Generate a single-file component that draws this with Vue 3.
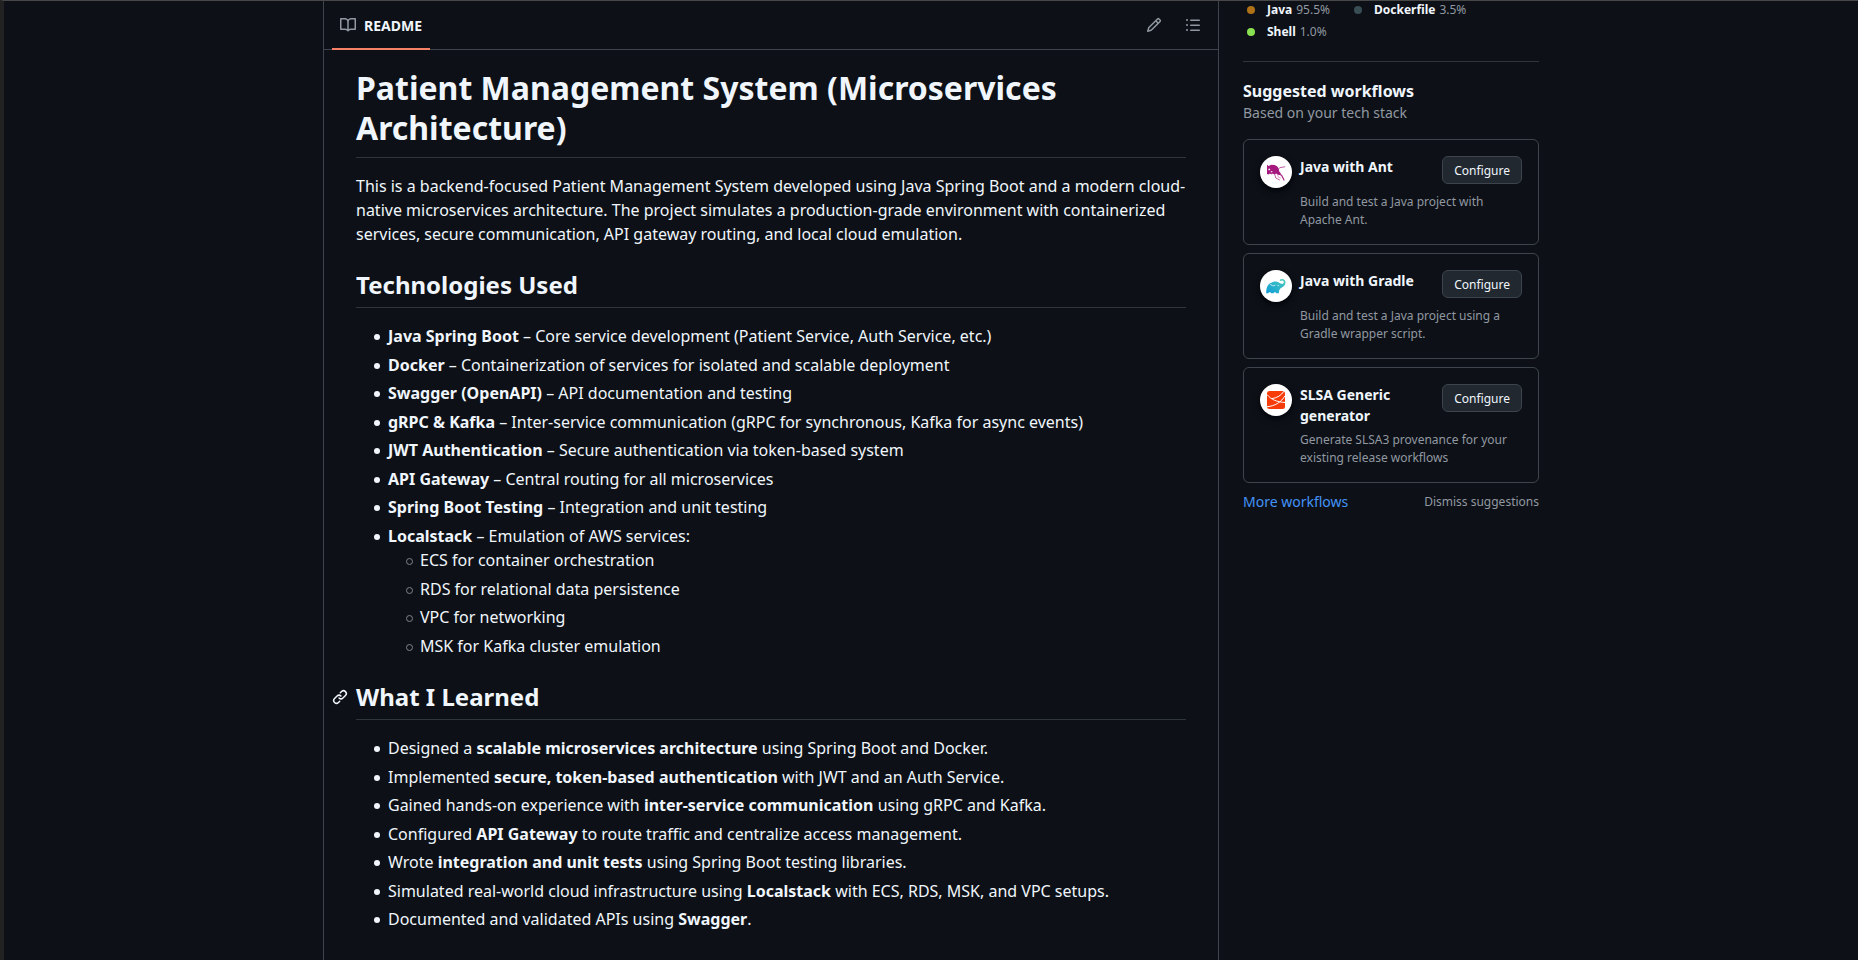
<script setup>
const technologies = [
  { name: 'Java Spring Boot', text: 'Core service development (Patient Service, Auth Service, etc.)' },
  { name: 'Docker', text: 'Containerization of services for isolated and scalable deployment' },
  { name: 'Swagger (OpenAPI)', text: 'API documentation and testing' },
  { name: 'gRPC & Kafka', text: 'Inter-service communication (gRPC for synchronous, Kafka for async events)' },
  { name: 'JWT Authentication', text: 'Secure authentication via token-based system' },
  { name: 'API Gateway', text: 'Central routing for all microservices' },
  { name: 'Spring Boot Testing', text: 'Integration and unit testing' },
  {
    name: 'Localstack',
    text: 'Emulation of AWS services:',
    children: [
      'ECS for container orchestration',
      'RDS for relational data persistence',
      'VPC for networking',
      'MSK for Kafka cluster emulation',
    ],
  },
]

const lessons = [
  ['Designed a ', 'scalable microservices architecture', ' using Spring Boot and Docker.'],
  ['Implemented ', 'secure, token-based authentication', ' with JWT and an Auth Service.'],
  ['Gained hands-on experience with ', 'inter-service communication', ' using gRPC and Kafka.'],
  ['Configured ', 'API Gateway', ' to route traffic and centralize access management.'],
  ['Wrote ', 'integration and unit tests', ' using Spring Boot testing libraries.'],
  ['Simulated real-world cloud infrastructure using ', 'Localstack', ' with ECS, RDS, MSK, and VPC setups.'],
  ['Documented and validated APIs using ', 'Swagger', '.'],
]

const languages = [
  { name: 'Java', share: '95.5%', key: 'java' },
  { name: 'Dockerfile', share: '3.5%', key: 'docker' },
  { name: 'Shell', share: '1.0%', key: 'shell' },
]

const workflows = [
  { id: 'ant', title: 'Java with Ant', text: 'Build and test a Java project with Apache Ant.' },
  { id: 'gradle', title: 'Java with Gradle', text: 'Build and test a Java project using a Gradle wrapper script.' },
  { id: 'slsa', title: 'SLSA Generic generator', text: 'Generate SLSA3 provenance for your existing release workflows' },
]
</script>

<template>
  <div class="page">
    <div class="container">
      <main class="readme">
        <header class="readme-bar">
          <nav>
            <a class="tab" href="#readme">
              <svg class="icon" viewBox="0 0 16 16" aria-hidden="true"><path d="M0 1.75A.75.75 0 0 1 .75 1h4.253c1.227 0 2.317.59 3 1.501A3.743 3.743 0 0 1 11.006 1h4.245a.75.75 0 0 1 .75.75v10.5a.75.75 0 0 1-.75.75h-4.507a2.25 2.25 0 0 0-1.591.659l-.622.621a.75.75 0 0 1-1.06 0l-.622-.621A2.25 2.25 0 0 0 5.258 13H.75a.75.75 0 0 1-.75-.75Zm7.251 10.324.004-5.073-.002-2.253A2.25 2.25 0 0 0 5.003 2.5H1.5v9h3.757a3.75 3.75 0 0 1 1.994.574ZM8.755 4.75l-.004 7.322a3.752 3.752 0 0 1 1.992-.572H14.5v-9h-3.495a2.25 2.25 0 0 0-2.25 2.25Z" /></svg>
              <span>README</span>
            </a>
          </nav>
          <div class="tools">
            <button type="button" class="tool" aria-label="Edit file">
              <svg class="icon" viewBox="0 0 16 16" aria-hidden="true"><path d="M11.013 1.427a1.75 1.75 0 0 1 2.474 0l1.086 1.086a1.75 1.75 0 0 1 0 2.474l-8.61 8.61c-.21.21-.47.364-.756.445l-3.251.93a.75.75 0 0 1-.927-.928l.929-3.25c.081-.286.235-.547.445-.758l8.61-8.61Zm.176 4.823L9.75 4.81l-6.286 6.287a.253.253 0 0 0-.064.108l-.558 1.953 1.953-.558a.253.253 0 0 0 .108-.064Zm1.238-3.763a.25.25 0 0 0-.354 0L10.811 3.75l1.439 1.44 1.263-1.263a.25.25 0 0 0 0-.354Z" /></svg>
            </button>
            <button type="button" class="tool" aria-label="Outline">
              <svg class="icon" viewBox="0 0 16 16" aria-hidden="true"><path d="M5.75 2.5h8.5a.75.75 0 0 1 0 1.5h-8.5a.75.75 0 0 1 0-1.5Zm0 5h8.5a.75.75 0 0 1 0 1.5h-8.5a.75.75 0 0 1 0-1.5Zm0 5h8.5a.75.75 0 0 1 0 1.5h-8.5a.75.75 0 0 1 0-1.5ZM2 14a1 1 0 1 1 0-2 1 1 0 0 1 0 2Zm1-6a1 1 0 1 1-2 0 1 1 0 0 1 2 0ZM2 4a1 1 0 1 1 0-2 1 1 0 0 1 0 2Z" /></svg>
            </button>
          </div>
        </header>

        <article class="markdown">
          <h1>Patient Management System (Microservices Architecture)</h1>
          <p>
            This is a backend-focused Patient Management System developed using Java Spring Boot and a modern
            cloud-native microservices architecture. The project simulates a production-grade environment with
            containerized services, secure communication, API gateway routing, and local cloud emulation.
          </p>

          <h2>Technologies Used</h2>
          <ul>
            <li v-for="tech in technologies" :key="tech.name">
              <strong>{{ tech.name }}</strong> – {{ tech.text }}
              <ul v-if="tech.children">
                <li v-for="child in tech.children" :key="child">{{ child }}</li>
              </ul>
            </li>
          </ul>

          <h2 id="what-i-learned">
            <a class="anchor" href="#what-i-learned" aria-label="Permalink: What I Learned">
              <svg class="icon" viewBox="0 0 16 16" aria-hidden="true"><path d="m7.775 3.275 1.25-1.25a3.5 3.5 0 1 1 4.95 4.95l-2.5 2.5a3.5 3.5 0 0 1-4.95 0 .751.751 0 0 1 .018-1.042.751.751 0 0 1 1.042-.018 1.998 1.998 0 0 0 2.83 0l2.5-2.5a2.002 2.002 0 0 0-2.83-2.83l-1.25 1.25a.751.751 0 0 1-1.042-.018.751.751 0 0 1-.018-1.042Zm-4.69 9.64a1.998 1.998 0 0 0 2.83 0l1.25-1.25a.751.751 0 0 1 1.042.018.751.751 0 0 1 .018 1.042l-1.25 1.25a3.5 3.5 0 1 1-4.95-4.95l2.5-2.5a3.5 3.5 0 0 1 4.95 0 .751.751 0 0 1-.018 1.042.751.751 0 0 1-1.042.018 1.998 1.998 0 0 0-2.83 0l-2.5 2.5a1.998 1.998 0 0 0 0 2.83Z" /></svg>
            </a>What I Learned
          </h2>
          <ul>
            <li v-for="[before, strong, after] in lessons" :key="strong">
              {{ before }}<strong>{{ strong }}</strong>{{ after }}
            </li>
          </ul>
        </article>
      </main>

      <aside class="sidebar">
        <ul class="languages">
          <li v-for="lang in languages" :key="lang.key">
            <span class="dot" :class="lang.key"></span>
            <span class="language"><strong>{{ lang.name }}</strong> {{ lang.share }}</span>
          </li>
        </ul>

        <section class="suggestions">
          <h2>Suggested workflows</h2>
          <p class="subtitle">Based on your tech stack</p>

          <div class="cards">
            <article v-for="flow in workflows" :key="flow.id" class="card">
              <span class="logo">
                <svg v-if="flow.id === 'ant'" viewBox="0 0 32 32" aria-hidden="true">
                  <path fill="#a5197f" d="M7 8.800l1.700 1.100 2.500-1.200 3.500.2 2.600 1.500 1.400 2.400.6 2.800 1.600 2-.7 1.200-2.500-.1-1.700-1.200-1.400.9-2.600-.8-.5 1-1.600-1.200-1.100 1-1.800-.5z" />
                  <path fill="#fff" d="M8.200 13l1.400-.5.7 1.300-1.500.8zM10.600 15.400l1.500-.5.4.9-1.400.6z" />
                  <g fill="none" stroke="#a5197f" stroke-width=".7" stroke-linecap="round">
                    <path d="M17.700 14l2-2.300 5.100-.9" />
                    <path d="M19 18.300l2.600.9 2.400 4.900" stroke-width="1.100" />
                    <path d="M14.800 18.500l1 3.500 3.700 1.900" />
                    <path d="M17.500 18.500l.8 2.500 2.200 1" stroke="#cf7fb8" />
                  </g>
                </svg>
                <svg v-else-if="flow.id === 'gradle'" viewBox="0 0 32 32" aria-hidden="true">
                  <defs>
                    <linearGradient id="gradle-fill" x1="0" y1="1" x2="1" y2="0">
                      <stop offset="0" stop-color="#0f9bd7" />
                      <stop offset="1" stop-color="#4bcdbb" />
                    </linearGradient>
                  </defs>
                  <path fill="url(#gradle-fill)" d="M24.700 10.200c-1.400-1.400-3.600-1.500-5.100-.3l.8 1.200c1-.8 2.300-.8 3 0 1 1.200.1 3-1.700 2.700-1.500-.3-3.100-1.800-5.400-2.300-2.100-.4-3.900.4-4.900 1.200-3.100.4-5.300 4.700-5.200 10.500h2.200c.2-1.400 2.500-1.400 2.700 0h2.500c.2-1.400 2.500-1.400 2.700 0h2.500c.2-3 .9-4.400 2.200-5.300 2.700-1 4.600-3.500 4.500-5.400 0-.9-.2-1.700-.8-2.300z" />
                  <path fill="none" stroke="#fff" stroke-width=".7" d="M10.200 13.800c1 1.800 2.900 2.600 5.100 1.300" />
                  <circle cx="18.200" cy="15.600" r=".6" fill="#fff" />
                </svg>
                <svg v-else viewBox="0 0 32 32" aria-hidden="true">
                  <rect x="7" y="7" width="18" height="18" rx="2.500" fill="#f73c0a" />
                  <g fill="none" stroke="#fff" stroke-width="1">
                    <path d="M7 10.500c4 5.200 10 7.400 18 8" />
                    <path d="M12 14.600c5-.7 9.500-3.300 11.800-7.300" />
                    <path d="M7 22.700c8-.6 14.500-4.700 18-11" />
                  </g>
                </svg>
              </span>
              <div class="card-body">
                <div class="card-head">
                  <h3>{{ flow.title }}</h3>
                  <button type="button" class="configure">Configure</button>
                </div>
                <p>{{ flow.text }}</p>
              </div>
            </article>
          </div>

          <div class="more">
            <a href="#workflows">More workflows</a>
            <button type="button" class="dismiss">Dismiss suggestions</button>
          </div>
        </section>
      </aside>
    </div>
  </div>
</template>

<style>
html,
body {
  background: #0d1117;
}
</style>

<style scoped>
.page {
  box-sizing: border-box;
  min-height: 100vh;
  border-left: 4px solid #222;
  border-top: 1px solid #484848;
  background: #0d1117;
  color: #f0f6fc;
  font: 14px/21px "Noto Sans", "Liberation Sans", sans-serif;
  display: flex;
  flex-direction: column;
}

.container {
  box-sizing: border-box;
  width: 100%;
  max-width: 1280px;
  margin: 0 auto;
  padding: 0 32px;
  flex: 1;
  display: grid;
  grid-template-columns: minmax(0, 1fr) 296px;
  gap: 24px;
}

h1,
h2,
h3,
p {
  margin: 0;
}

strong,
h1,
h2,
h3 {
  font-weight: 700;
}

button {
  font-family: inherit;
  cursor: pointer;
}

a {
  color: inherit;
  text-decoration: none;
}

.icon {
  display: block;
  width: 16px;
  height: 16px;
  fill: currentColor;
}

.readme {
  border: solid #3d444d;
  border-width: 0 1px;
}

.readme-bar {
  display: flex;
  justify-content: space-between;
  align-items: center;
  padding: 0 9px 0 8px;
  height: 48px;
  border-bottom: 1px solid #3d444d;
}

.tab {
  box-sizing: border-box;
  display: flex;
  align-items: center;
  gap: 8px;
  height: 49px;
  padding: 2px 8px 0;
  border-bottom: 2px solid #f78166;
  font-weight: 700;
}

.tab .icon,
.tool {
  color: #9198a1;
}

.tools {
  display: flex;
  gap: 7px;
}

.tool {
  display: grid;
  place-items: center;
  width: 32px;
  height: 32px;
  padding: 0;
  border: 0;
  border-radius: 6px;
  background: none;
}

.markdown {
  padding: 18px 32px 28px;
  font-size: 16px;
  line-height: 24px;
}

.markdown h1,
.markdown h2 {
  border-bottom: 1px solid #2f353d;
  margin-bottom: 16px;
}

.markdown h1 {
  font-size: 32px;
  line-height: 40px;
  padding-bottom: 9px;
}

.markdown h2 {
  position: relative;
  font-size: 24px;
  line-height: 30px;
  padding-bottom: 7px;
  margin-top: 24px;
}

.anchor {
  position: absolute;
  left: -24px;
  top: 7px;
}

.markdown ul {
  margin: 0;
  padding-left: 32px;
  list-style: none;
}

.markdown li::before {
  content: "";
  float: left;
  width: 6px;
  height: 6px;
  margin: 10px 8px 0 -14px;
  border-radius: 50%;
  background: #f0f6fc;
}

.markdown li li::before {
  box-sizing: border-box;
  width: 7px;
  height: 7px;
  margin-right: 7px;
  border: 1px solid #80858b;
  background: none;
}

.markdown li:nth-child(even) {
  margin-top: 5px;
}

.markdown li:nth-child(odd) {
  margin-top: 4px;
}

.markdown li:first-child {
  margin-top: 0;
}

.languages {
  list-style: none;
  display: flex;
  flex-wrap: wrap;
  gap: 4px 20px;
  margin: 0;
  padding: 0 0 20px;
  border-bottom: 1px solid #2f353d;
  color: #9198a1;
  font-size: 12px;
  line-height: 18px;
}

.languages li {
  display: flex;
  align-items: center;
  gap: 12px;
  padding-left: 4px;
}

.language {
  display: flex;
  gap: 4px;
}

.languages strong {
  color: #f0f6fc;
}

.dot {
  width: 8px;
  height: 8px;
  border-radius: 50%;
}

.java {
  background: #b07219;
}

.docker {
  background: #384d54;
}

.shell {
  background: #89e051;
}

.suggestions {
  padding-top: 18px;
}

.suggestions h2 {
  font-size: 16px;
  line-height: 22px;
}

.subtitle {
  color: #9198a1;
}

.cards {
  display: grid;
  gap: 8px;
  margin: 16px 0 8px;
}

.card {
  display: flex;
  gap: 8px;
  padding: 16px 16px 15px;
  border: 1px solid #3d444d;
  border-radius: 6px;
}

.logo {
  flex: none;
  width: 32px;
  height: 32px;
  border-radius: 50%;
  background: #fff;
  box-shadow: 0 3px 6px #010409;
}

.logo svg {
  display: block;
}

.card-body {
  flex: 1;
  min-width: 0;
}

.card-head {
  display: flex;
  align-items: flex-start;
  justify-content: space-between;
  gap: 16px;
  min-height: 32px;
  margin-bottom: 5px;
}

.card h3 {
  font-size: 14px;
}

.card p {
  color: #9198a1;
  font-size: 12px;
  line-height: 18px;
}

.configure {
  flex: none;
  height: 28px;
  padding: 0 11px;
  border: 1px solid #3d444d;
  border-radius: 6px;
  background: #212830;
  color: #f0f6fc;
  font-size: 12px;
}

.more {
  display: flex;
  align-items: center;
  justify-content: space-between;
}

.more a {
  color: #4493f8;
}

.dismiss {
  padding: 0;
  border: 0;
  background: none;
  color: #9198a1;
  font-size: 12px;
}
</style>
